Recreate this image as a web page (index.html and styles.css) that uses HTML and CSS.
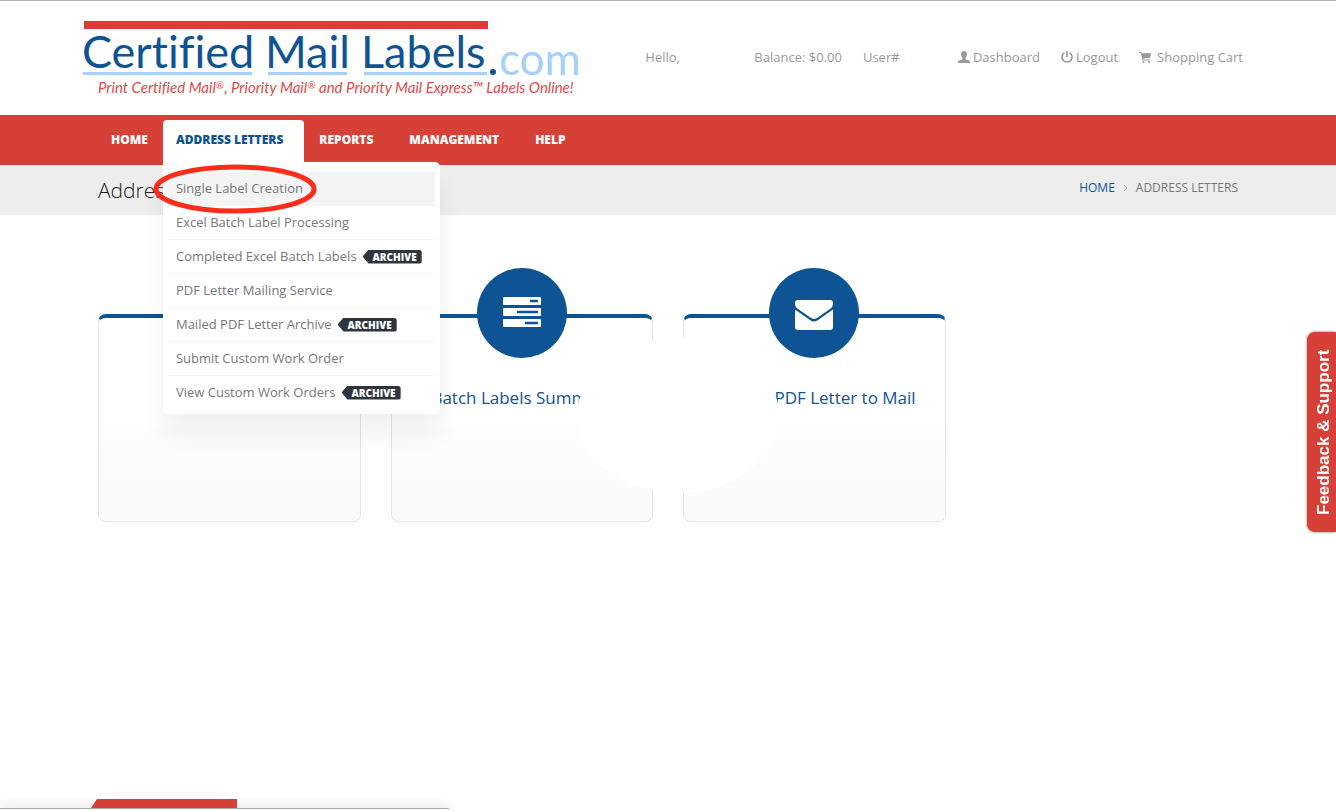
FILE: index.html
```html
<!DOCTYPE html>
<html lang="en">
  <head>
    <meta charset="UTF-8" />
    <meta name="viewport" content="width=device-width, initial-scale=1.0" />
    <title>Address Letters</title>
    <link rel="stylesheet" href="styles.css">
  </head>
  <body>
    <header class="header">
      <div class="container header-row">
        <a href="#" class="logo">
          <svg width="502" height="80" viewBox="0 0 502 80" role="img" aria-label="Certified Mail Labels.com">
            <rect x="1" y="0" width="404" height="8" fill="#de3a37" />
            <g class="logo-name">
              <text x="-1" y="47">Certified</text>
              <text x="182" y="47">Mail</text>
              <text x="278" y="47">Labels</text>
            </g>
            <g fill="#a5d0fb">
              <rect x="0" y="51" width="169" height="3" />
              <rect x="185" y="51" width="79" height="3" />
              <rect x="281" y="51" width="123" height="3" />
            </g>
            <circle cx="410" cy="51" r="3" fill="#0e5394" />
            <text class="logo-com" x="416" y="54">com</text>
            <text class="logo-tag" x="15" y="72">Print Certified Mail<tspan class="reg" dy="-4">®</tspan><tspan dy="4">, Priority Mail</tspan><tspan class="reg" dy="-4">®</tspan><tspan dy="4"> and Priority Mail Express™ Labels Online!</tspan></text>
          </svg>
        </a>
        <ul class="user-links">
          <li class="hello">Hello,</li>
          <li>Balance: $0.00</li>
          <li class="user-no">User#</li>
          <li>
            <a href="#">
              <svg width="12" height="12" viewBox="0 0 12 12"><path fill="currentColor" d="M6 0C4 0 3 1.300 3 3.200c0 1.700.7 3.200 1.600 3.900v1.100C3.800 8.700 0 9.200 0 10.700V12h12v-1.300c0-1.500-3.800-2-4.600-2.500V7.100C8.300 6.400 9 4.900 9 3.200 9 1.300 8 0 6 0z" /></svg>
              Dashboard
            </a>
          </li>
          <li>
            <a href="#">
              <svg width="12" height="12" viewBox="0 0 12 12"><path fill="none" stroke="currentColor" stroke-width="1.600" d="M3.500 1.700a5 5 0 1 0 5 0M6 0v6" /></svg>
              Logout
            </a>
          </li>
          <li>
            <a href="#" class="cart">
              <svg width="12" height="11" viewBox="0 0 12 11"><path fill="currentColor" d="M0 0h2.500l.4 1.300H12l-.8 4.400-7 .9.200.8h6.400v1H3.500L1.800 1H0z" /><circle cx="4.300" cy="10" r="1" fill="currentColor" /><circle cx="10" cy="10" r="1" fill="currentColor" /></svg>
              Shopping Cart
            </a>
          </li>
        </ul>
      </div>
    </header>

    <nav class="navbar">
      <ul class="container menu">
        <li><a href="#" class="menu-link home">HOME</a></li>
        <li class="open">
          <a href="#" class="menu-link">ADDRESS LETTERS</a>
          <ul class="dropdown">
            <li class="active">
              <a href="#">Single Label Creation</a>
              <svg class="marker" width="164" height="50" viewBox="0 0 164 50"><ellipse cx="82" cy="25" rx="79" ry="22" fill="none" stroke="#fc2c1a" stroke-width="5" /></svg>
            </li>
            <li><a href="#">Excel Batch Label Processing</a></li>
            <li><a href="#">Completed Excel Batch Labels <span class="tip">ARCHIVE</span></a></li>
            <li><a href="#">PDF Letter Mailing Service</a></li>
            <li><a href="#">Mailed PDF Letter Archive <span class="tip">ARCHIVE</span></a></li>
            <li><a href="#">Submit Custom Work Order</a></li>
            <li><a href="#">View Custom Work Orders <span class="tip">ARCHIVE</span></a></li>
          </ul>
        </li>
        <li><a href="#" class="menu-link">REPORTS</a></li>
        <li><a href="#" class="menu-link">MANAGEMENT</a></li>
        <li><a href="#" class="menu-link">HELP</a></li>
      </ul>
    </nav>

    <section class="page-header">
      <div class="container page-header-row">
        <h1>Address</h1>
        <div class="breadcrumb">
          <a href="#">HOME</a>
          <svg width="5" height="8" viewBox="0 0 5 8"><path d="M1 1l3 3-3 3" fill="none" stroke="#999" /></svg>
          <span>ADDRESS LETTERS</span>
        </div>
      </div>
    </section>

    <main class="container cards">
      <div class="card">
        <span class="card-icon"></span>
        <span class="card-title"></span>
        <span class="card-foot"></span>
      </div>
      <a href="#" class="card">
        <span class="card-icon">
          <svg width="38" height="30" viewBox="0 0 38 30"><g fill="#fff"><rect width="38" height="8" rx="1" /><rect y="11" width="38" height="8" rx="1" /><rect y="22" width="38" height="8" rx="1" /></g><path stroke="#0e5394" stroke-width="2.500" d="M27 4h8M14 15h21M22 26h13" /></svg>
        </span>
        <span class="card-title">Batch Labels Summary</span>
        <span class="card-foot"></span>
      </a>
      <a href="#" class="card">
        <span class="card-icon mail">
          <svg width="38" height="30" viewBox="0 0 38 30"><path fill="#fff" d="M3 0h32q3 0 3 3v1q0 3-3 5L22 18q-3 2-6 0L3 9Q0 7 0 4V3q0-3 3-3zM0 9.500l15 10.500q4 3 8 0L38 9.500V27q0 3-3 3H3q-3 0-3-3z" /></svg>
        </span>
        <span class="card-title">Upload PDF Letter to Mail</span>
        <span class="card-foot"></span>
      </a>
      <div class="cover"></div>
    </main>

    <button class="feedback" type="button">Feedback &amp; Support</button>

    <footer class="footer">
      <div class="container"><div class="ribbon"></div></div>
      <div class="status"></div>
    </footer>
  </body>
</html>
```
FILE: styles.css
```css
* {
  box-sizing: border-box;
}

body {
  margin: 0;
  min-height: 100vh;
  display: flex;
  flex-direction: column;
  font-family: "Open Sans", Arial, sans-serif;
  font-size: 13px;
  line-height: 20px;
  color: #777;
  background: #fff;
  border-top: 1px solid #b3b3b3;
}

a {
  color: inherit;
  text-decoration: none;
}

ul {
  list-style: none;
  margin: 0;
  padding: 0;
}

.container {
  width: 100%;
  max-width: 1170px;
  margin: 0 auto;
  padding: 0 15px;
}

/* header */
.header-row {
  display: flex;
  justify-content: space-between;
  height: 114px;
  padding: 20px 10px 0 0;
}

.logo svg {
  display: block;
  overflow: visible;
}

.logo-name {
  font-family: Lato, sans-serif;
  font-size: 45px;
  font-variant-ligatures: none;
  fill: #0e5394;
}

.logo-com {
  font-family: Lato, sans-serif;
  font-size: 44px;
  fill: #a5d0fb;
}

.logo-tag {
  font-family: Lato, sans-serif;
  font-style: italic;
  font-size: 15px;
  font-variant-ligatures: none;
  fill: #e04a48;
}

.logo-tag .reg {
  font-size: 10px;
}

.user-links {
  display: flex;
  gap: 21px;
  padding-top: 26px;
  color: #999;
}

.user-links a {
  display: flex;
  align-items: center;
  gap: 3px;
}

.user-links .cart {
  gap: 6px;
}

.hello {
  min-width: 88px;
}

.user-no {
  min-width: 74px;
}

/* main menu */
.navbar {
  background: #d74036;
}

.menu {
  display: flex;
  gap: 2px;
  height: 50px;
  padding-top: 5px;
}

.menu-link {
  display: block;
  height: 42px;
  padding: 0 21px 0 13px;
  border-radius: 4px 4px 0 0;
  font-size: 12px;
  font-weight: 800;
  line-height: 40px;
  color: #fff;
}

.menu-link.home {
  padding-right: 13px;
}

.open {
  position: relative;
}

.open .menu-link {
  background: #fff;
  color: #0e5394;
}

.dropdown {
  position: absolute;
  top: 42px;
  left: 0;
  z-index: 5;
  width: 277px;
  padding: 10px 5px 4px;
  background: #fff;
  border-radius: 0 5px 5px 5px;
  box-shadow: 0 20px 25px rgba(0, 0, 0, 0.06);
}

.dropdown li {
  position: relative;
  height: 34px;
  padding-left: 8px;
  line-height: 33px;
  border-bottom: 1px solid #f4f4f4;
}

.dropdown li:last-child {
  border-bottom: 0;
}

.dropdown .active {
  background: #f4f4f4;
}

.dropdown a {
  display: flex;
  align-items: center;
}

.marker {
  position: absolute;
  top: -8px;
  left: -15px;
}

.tip {
  margin-left: 6px;
  padding: 0 5px 0 10px;
  border-radius: 3px;
  background: #2e353e;
  clip-path: polygon(0 50%, 6px 0, 100% 0, 100% 100%, 6px 100%);
  color: #fff;
  font-size: 10px;
  font-weight: 800;
  line-height: 14px;
}

/* title bar */
.page-header {
  background: #ededed;
}

.page-header-row {
  display: flex;
  justify-content: space-between;
  align-items: center;
  height: 50px;
}

.page-header h1 {
  margin: 0;
  font-size: 21px;
  font-weight: 300;
  color: #1d2127;
}

.breadcrumb {
  display: flex;
  align-items: center;
  gap: 8px;
  margin-bottom: 4px;
  font-size: 12px;
}

.breadcrumb a {
  color: #0e5394;
}

/* cards */
.cards {
  position: relative;
  display: grid;
  grid-template-columns: repeat(4, 1fr);
  gap: 30px;
  padding-top: 99px;
}

.card {
  display: flex;
  flex-direction: column;
  align-items: center;
  height: 208px;
  border: 1px solid #e4e4e4;
  border-top: 4px solid #0e5394;
  border-radius: 8px;
}

.card-icon {
  display: flex;
  flex: none;
  align-items: center;
  justify-content: center;
  width: 90px;
  height: 90px;
  margin-top: -50px;
  padding-bottom: 2px;
  border-radius: 50%;
  background: #0e5394;
}

.card-icon.mail {
  padding: 4px 0 0;
}

.card-title {
  height: 20px;
  margin-top: 30px;
  font-size: 17px;
  color: #0e5394;
  white-space: nowrap;
}

.card-foot {
  flex: 1;
  align-self: stretch;
  margin-top: 19px;
  border-radius: 0 0 7px 7px;
  background: linear-gradient(#fdfdfd, #fbfbfb);
}

.cover {
  position: absolute;
  top: 123px;
  left: 494px;
  width: 202px;
  height: 155px;
  border-radius: 50%;
  background: #fff;
}

/* side tab */
.feedback {
  position: fixed;
  top: 332px;
  right: 0;
  width: 29px;
  height: 200px;
  padding: 0 5px 0 0;
  border: 0;
  border-radius: 0 8px 8px 0;
  background: #d74036;
  box-shadow: 0 0 3px rgba(0, 0, 0, 0.5);
  color: #fff;
  font-family: "Liberation Sans", Arial, sans-serif;
  font-size: 17px;
  font-weight: bold;
  writing-mode: vertical-rl;
  transform: rotate(180deg);
}

/* bottom edge */
.footer {
  margin-top: auto;
  padding-top: 20px;
  overflow: hidden;
}

.footer .container {
  padding-left: 8px;
}

.ribbon {
  width: 146px;
  height: 9px;
  background: #d74036;
  clip-path: polygon(6px 0, 100% 0, 100% 100%, 0 100%);
}

.status {
  width: 450px;
  height: 3px;
  border-top: 1px solid #aaa;
  border-radius: 0 3px 0 0;
  box-shadow: 0 0 12px rgba(0, 0, 0, 0.25);
}
```
